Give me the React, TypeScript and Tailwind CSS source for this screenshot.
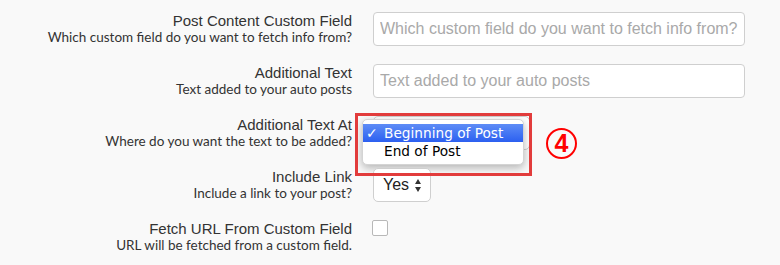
import { FC, ReactNode } from "react";

const titleFont = { fontFamily: '"Liberation Sans", Arial, sans-serif' };

type RowProps = {
    title: string;
    hint: string;
    children: ReactNode;
};

const Row: FC<RowProps> = ({ title, hint, children }) => {
    return (
        <div className="flex items-start h-[34px] mb-[18px]">
            <div className="w-[352px] text-right text-[#333]">
                <div className="text-[15px] leading-[17px] font-['Liberation_Sans',Arial,sans-serif]">{title}</div>
                <div className="text-[13.5px] leading-[17px] font-['Lato',sans-serif]">{hint}</div>
            </div>
            <div className="ml-[21px] relative">{children}</div>
        </div>
    );
};

const TextInput: FC<{ placeholder: string }> = ({ placeholder }) => (
    <input
        readOnly
        placeholder={placeholder}
        style={titleFont}
        className="w-[372px] h-[34px] bg-white border border-[#cfcfcf] rounded-[4px] px-[6px] text-[16px] text-[#333] placeholder:text-[#a9a9a9] outline-none"
    />
);

const UpDown = () => (
    <svg width="6" height="13" viewBox="0 0 6 13" className="ml-auto">
        <path d="M3 0 L6 5 L0 5 Z" fill="#333" />
        <path d="M3 13 L6 8 L0 8 Z" fill="#333" />
    </svg>
);

const App: FC = () => {
    return (
        <div className="relative w-[780px] h-[265px] bg-[#f9f9f9] pt-[12px] overflow-hidden">
            <Row title="Post Content Custom Field" hint="Which custom field do you want to fetch info from?">
                <TextInput placeholder="Which custom field do you want to fetch info from?" />
            </Row>

            <Row title="Additional Text" hint="Text added to your auto posts">
                <TextInput placeholder="Text added to your auto posts" />
            </Row>

            <Row title="Additional Text At" hint="Where do you want the text to be added?">
                <div className="w-[157px] h-[34px] bg-white border border-[#cfcfcf] rounded-[5px]" />
                {/* open native menu */}
                <div className="absolute left-[-11px] top-[3px] w-[162px] bg-white border border-[#d4d4d4] rounded-[5px] shadow-[0_3px_9px_rgba(0,0,0,0.28)] pt-[4px] pb-[4px] font-['DejaVu_Sans',sans-serif] text-[13.7px] text-black">
                    <div className="flex items-center h-[18px] bg-gradient-to-b from-[#5e8cf6] to-[#2c5ff0] text-white">
                        <span className="w-[21px] pl-[3px] text-[14px] font-bold">✓</span>
                        <span>Beginning of Post</span>
                    </div>
                    <div className="flex items-center h-[18px]">
                        <span className="w-[21px]" />
                        <span>End of Post</span>
                    </div>
                </div>
            </Row>

            <Row title="Include Link" hint="Include a link to your post?">
                <div
                    style={titleFont}
                    className="flex items-center w-[58px] h-[34px] bg-white border border-[#cfcfcf] rounded-[5px] pl-[9px] pr-[9px] text-[16px] text-[#222]"
                >
                    <span>Yes</span>
                    <UpDown />
                </div>
            </Row>

            <Row title="Fetch URL From Custom Field" hint="URL will be fetched from a custom field.">
                <div className="-ml-px w-[16px] h-[16px] bg-white border border-[#b8b8b8] rounded-[2px]" />
            </Row>

            {/* annotation */}
            <div className="absolute left-[355px] top-[113px] w-[177px] h-[63px] border-[3px] border-[#e23c3c]" />
            <div className="absolute left-[546px] top-[128px] w-[31px] h-[31px] rounded-full border-[2.5px] border-[#f00] flex items-center justify-center text-[#f00] text-[25px] font-bold leading-none font-['Liberation_Sans',Arial,sans-serif]">
                4
            </div>
        </div>
    );
};

export default App;
